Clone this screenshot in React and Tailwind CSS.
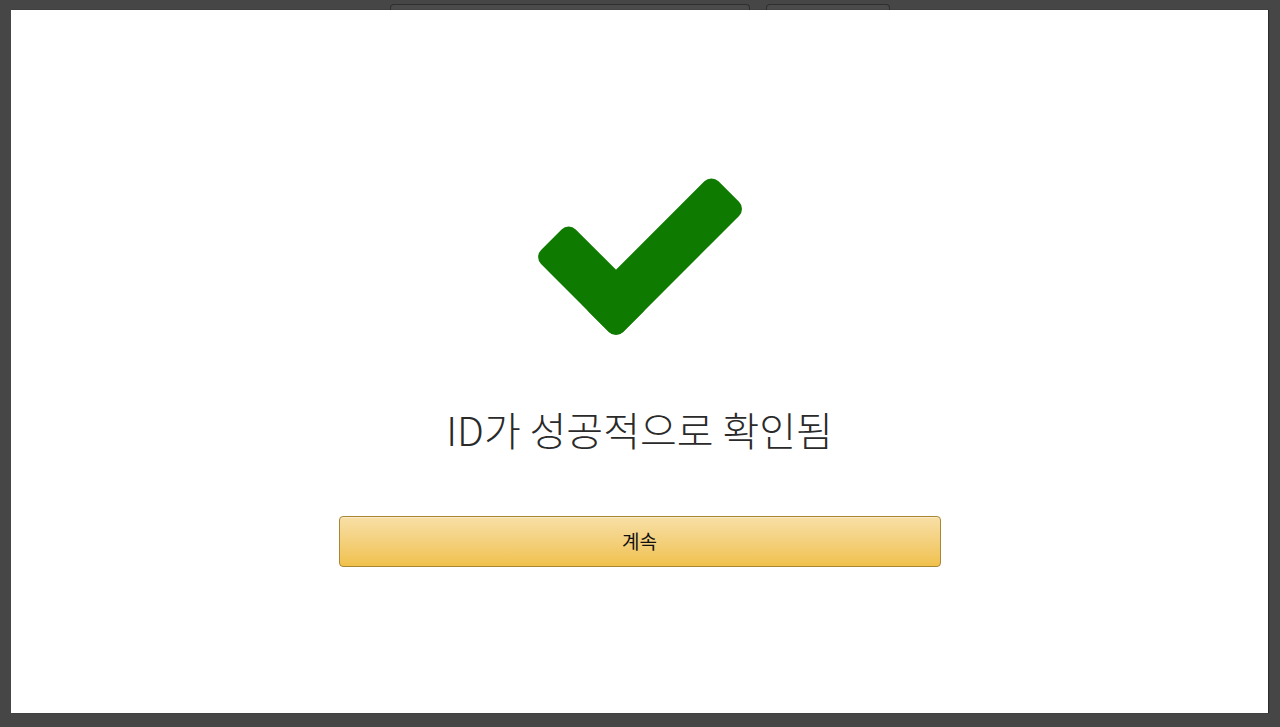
import React from 'react';

function CheckMark() {
  return (
    <svg width="204" height="157" viewBox="537 178 204 157" overflow="visible">
      <g transform="translate(615 339) rotate(45)" fill="#0f7a00">
        <rect x="-49" y="-184" width="49" height="184" rx="10" />
        <rect x="-116" y="-49" width="116" height="49" rx="10" />
      </g>
    </svg>
  );
}

export default function App() {
  return (
    <div className="h-[727px] w-full bg-[#464646] flex flex-col overflow-hidden" style={{ fontFamily: '"Noto Sans CJK KR", "Noto Sans", sans-serif' }}>
      {/* fields peeking out behind the dialog */}
      <div className="h-[10px] flex pt-[4px] pl-[390px] gap-[16px]">
        <div className="w-[360px] h-[8px] rounded-t-[4px] border border-b-0 border-[#2f2f2f] bg-[#4b4b4b]" />
        <div className="w-[124px] h-[8px] rounded-t-[4px] border border-b-0 border-[#2f2f2f] bg-[#4b4b4b]" />
      </div>

      {/* dialog */}
      <div className="ml-[11px] mr-[12px] h-[703px] bg-white flex flex-col items-center shadow-[1px_0_1px_rgba(0,0,0,0.35)] relative z-10">
        <div className="mt-[168px]">
          <CheckMark />
        </div>

        <h1 className="mt-[69px] text-[40px] leading-[50px] font-light text-[#2a2a2a]">
          ID가 성공적으로 확인됨
        </h1>

        <button className="mt-[62px] w-[602px] h-[51px] rounded-[4px] border border-[#a88734] bg-gradient-to-b from-[#f7dfa5] to-[#f0c14b] text-[19px] font-normal text-[#111] shadow-[inset_0_1px_0_rgba(255,255,255,0.4)]">
          계속
        </button>
      </div>
    </div>
  );
}
